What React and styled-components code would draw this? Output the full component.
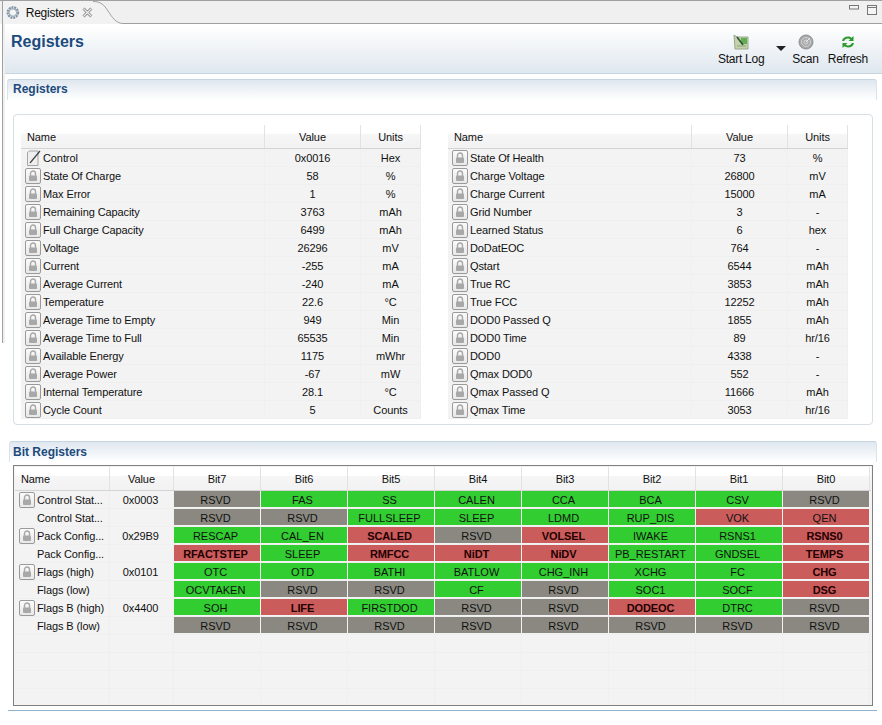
import React from "react"
import styled, { createGlobalStyle } from "styled-components"

const Global = createGlobalStyle`
  html, body { margin: 0; padding: 0; background: #fff; }
  body { font-family: "Liberation Sans", Arial, sans-serif; font-size: 12px; color: #111; }
`

const Page = styled.div`
  width: 882px;
  height: 725px;
  overflow: hidden;
  background: #fff;
  display: flex;
  flex-direction: column;
`
const TabStrip = styled.div`
  height: 23px;
  display: flex;
  align-items: stretch;
  background: #f0f0f0;
  border-top: 1px solid #a0a0a0;
  position: relative;
  &::after {
    content: "";
    flex: 1;
    border-bottom: 1px solid #a0a0a0;
  }
`
const Tab = styled.div`
  width: 87px;
  padding-left: 3px;
  display: flex;
  align-items: center;
  background: #f2f2f2;
  border-left: 1px solid #a0a0a0;
  margin-left: 2px;
  font-size: 12px;
  letter-spacing: -0.25px;
  color: #111;
`
const TabLabel = styled.span`
  margin: 0 8px 0 6px;
`
const TabControls = styled.div`
  position: absolute;
  right: 5px;
  top: 4px;
  display: flex;
  gap: 8px;
  align-items: flex-start;
`
const Body = styled.div`
  flex: 1;
  display: flex;
  flex-direction: column;
  min-height: 0;
  position: relative;
  &::before {
    content: "";
    position: absolute;
    left: 2px;
    top: 0;
    width: 2px;
    height: 319px;
    background: #f0f0f0;
    border-left: 1px solid #a0a0a0;
  }
`
const FormHead = styled.div`
  height: 48px;
  box-sizing: border-box;
  margin: 2px 0 0 5px;
  padding: 5px 14px 0 6px;
  display: flex;
  justify-content: space-between;
  background: linear-gradient(#ffffff, #dfe7ef);
  border-bottom: 1px solid #c6d5e2;
`
const Title = styled.h1`
  margin: 0;
  font-size: 16px;
  line-height: 22px;
  font-weight: bold;
  color: #1c4a7c;
`
const Tools = styled.div`
  display: flex;
  align-items: flex-start;
  margin-top: 3px;
`
const Tool = styled.div`
  display: flex;
  flex-direction: column;
  align-items: center;
  gap: 2px;
  margin-left: ${p => p.$gap || 0}px;
  font-size: 12px;
  line-height: 15px;
  letter-spacing: -0.25px;
  color: #111;
`
const Caret = styled.div`
  width: 0;
  height: 0;
  margin: 12px 6px 0 12px;
  border-left: 5px solid transparent;
  border-right: 5px solid transparent;
  border-top: 5px solid #222;
`
const Section = styled.section`
  margin: ${p => p.$top}px 5px 0 ${p => p.$left}px;
`
const SectionHead = styled.div`
  height: 20px;
  margin-left: ${p => p.$inset || 0}px;
  padding-left: ${p => p.$pad}px;
  font-size: 12px;
  line-height: ${p => p.$line}px;
  font-weight: bold;
  color: #1c4a7c;
  background: linear-gradient(#dfe7ef, #ffffff);
  border-top: 1px solid #c6d5e2;
  border-left: 1px solid #d9e3ec;
  border-right: 1px solid #d9e3ec;
  border-radius: 3px 3px 0 0;
`
const Card = styled.div`
  margin: 14px 4px 0 6px;
  height: 311px;
  box-sizing: border-box;
  padding: 10px 7px 0;
  display: flex;
  gap: 27px;
  border: 1px solid #d6dee6;
  border-radius: 4px;
`
const TableBox = styled.div`
  width: 400px;
`
const Row = styled.div`
  display: grid;
  grid-template-columns: ${p => p.$cols};
  height: 18px;
  background: #f3f3f3;
  border-bottom: 1px solid #efefef;
  box-sizing: border-box;
`
const HeadRow = styled(Row)`
  height: 24px;
  background: linear-gradient(#ffffff 36%, #f6f6f6 40%, #f2f2f2);
  border-bottom: 1px solid #d4d4d4;
`
const HeadCell = styled.div`
  display: flex;
  align-items: center;
  justify-content: ${p => (p.$left ? "flex-start" : "center")};
  padding-left: ${p => (p.$left ? "6px" : 0)};
  border-right: 1px solid #e2e2e2;
  font-size: 11px;
  letter-spacing: -0.1px;
  color: #111;
`
const NameCell = styled.div`
  display: flex;
  align-items: center;
  gap: 2px;
  padding-left: 4px;
  font-size: 11px;
  letter-spacing: -0.1px;
  white-space: nowrap;
  border-right: 1px solid #efefef;
  overflow: hidden;
`
const Cell = styled.div`
  display: flex;
  align-items: center;
  justify-content: center;
  font-size: 11px;
  letter-spacing: -0.1px;
  border-right: 1px solid #efefef;
`
const ValueCell = styled(Cell)`
  padding-right: 2px;
`
const IconBtn = styled.span`
  width: 16px;
  height: 16px;
  box-sizing: border-box;
  flex: none;
  border: 1px solid #9a9a9a;
  border-radius: 2px;
  background: linear-gradient(#fbfbfb, #e8e8e8);
  display: flex;
  align-items: center;
  justify-content: center;
`
const PlainIcon = styled.span`
  width: 14px;
  height: 16px;
  margin-left: 2px;
  flex: none;
  display: flex;
`
const Spacer = styled.span`
  width: 16px;
  flex: none;
`
const BitFrame = styled.div`
  margin: 3px 4px 0 5px;
  height: 241px;
  box-sizing: border-box;
  border: 1px solid #808080;
  padding: 1px;
  background: #f3f3f3;
  overflow: hidden;
`
const BitCell = styled.div`
  display: flex;
  align-items: center;
  justify-content: center;
  padding: 1px 3px 0 0;
  margin: 0 1px 1px 0;
  font-size: 11px;
  font-weight: ${p => (p.$bold ? "bold" : "normal")};
  letter-spacing: ${p => (p.$bold ? "-0.1px" : "0")};
  color: ${p => (p.$bold ? "#200" : "#111")};
  background: ${p => ({ g: "#31cd31", r: "#cb5c5c", n: "#8a8880" }[p.$state])};
`
const BottomRule = styled.div`
  margin-top: 4px;
  height: 1px;
  background: #91b2cc;
`

const Lock = () => (
  <IconBtn>
    <svg width="10" height="12" viewBox="0 0 10 12">
      <path d="M2.500 6V3.500a2.500 2.500 0 0 1 5 0V6" fill="none" stroke="#a8a8a8" strokeWidth="1.4" />
      <rect x="1" y="5.500" width="8" height="5.500" rx="1" fill="#a8a8a8" />
    </svg>
  </IconBtn>
)
const Pencil = () => (
  <PlainIcon>
    <svg width="14" height="16" viewBox="0 0 14 16">
      <path d="M.5 2.500l2-1.500h8.500v14.500H.5z" fill="#efefef" stroke="#a5a5a5" />
      <path d="M3 13L13 1" stroke="#444" strokeWidth="1.2" />
    </svg>
  </PlainIcon>
)
const Gear = () => (
  <svg width="14" height="15" viewBox="0 0 15 15">
    <circle cx="7.500" cy="7.500" r="5.200" fill="none" stroke="#7f93a6" strokeWidth="3.400" strokeDasharray="2 .8" />
    <circle cx="7.500" cy="7.500" r="4.200" fill="none" stroke="#a9b6c2" strokeWidth="1.400" />
    <circle cx="7.500" cy="7.500" r="2.600" fill="#f3f5f7" />
  </svg>
)
const CloseX = () => (
  <svg width="11" height="11" viewBox="0 0 11 11">
    <path d="M1.500 1.500l8 8M9.500 1.500l-8 8" stroke="#8a8a8a" strokeWidth="3" />
    <path d="M1.500 1.500l8 8M9.500 1.500l-8 8" stroke="#f4f4f4" strokeWidth="1.200" />
  </svg>
)
const TabCurve = () => (
  <svg width="30" height="23" viewBox="0 0 30 23">
    <path d="M0 0c8 0 11 4 15 10s8 12 15 12.500V23H0z" fill="#f2f2f2" />
    <path d="M0 .500c8 0 11 3.500 15 9.500s8 12.500 15 12.500" fill="none" stroke="#a0a0a0" />
  </svg>
)
const LogIcon = () => (
  <svg width="16" height="16" viewBox="0 0 16 16">
    <path d="M1 1l3 2h11v12H2z" fill="#c3d2a8" stroke="#9aa98c" />
    <rect x="8" y="4" width="6" height="6" fill="#5fae4f" />
    <path d="M4 3l6 8" stroke="#2f4f3f" strokeWidth="1.600" />
    <path d="M4 12h9" stroke="#8fa37f" />
  </svg>
)
const ScanIcon = () => (
  <svg width="16" height="16" viewBox="0 0 16 16">
    <circle cx="8" cy="8" r="7" fill="#a8a8a8" stroke="#8f8f8f" />
    <circle cx="8" cy="8" r="4.500" fill="none" stroke="#d2d2d2" />
    <circle cx="8" cy="8" r="2" fill="none" stroke="#dcdcdc" />
    <path d="M8 8l4-4" stroke="#e8e8e8" />
  </svg>
)
const RefreshIcon = () => (
  <svg width="16" height="16" viewBox="0 0 16 16">
    <path d="M2 7c.5-3 3-4.500 6-4.500 1.500 0 2.500.5 3.500 1.200L13.500 2v5H8.500l1.800-1.800C9.500 4.700 8.800 4.500 8 4.500 6 4.500 4.700 5.500 4.200 7z" fill="#2d9a2d" />
    <path d="M14 9c-.5 3-3 4.500-6 4.500-1.500 0-2.500-.5-3.500-1.200L2.500 14V9h5l-1.800 1.800c.8.500 1.500.7 2.300.7 2 0 3.300-1 3.800-2.500z" fill="#2d9a2d" />
  </svg>
)
const MinMax = () => (
  <>
    <svg width="10" height="5" viewBox="0 0 10 5"><rect x=".5" y=".5" width="9" height="3.500" fill="#f4f4f4" stroke="#777" /></svg>
    <svg width="10" height="10" viewBox="0 0 10 10"><rect x=".5" y=".5" width="9" height="9" fill="#f4f4f4" stroke="#777" /><path d="M1 2.500h8" stroke="#777" /></svg>
  </>
)

const leftRows = [
  ["Control", "0x0016", "Hex", true],
  ["State Of Charge", "58", "%"],
  ["Max Error", "1", "%"],
  ["Remaining Capacity", "3763", "mAh"],
  ["Full Charge Capacity", "6499", "mAh"],
  ["Voltage", "26296", "mV"],
  ["Current", "-255", "mA"],
  ["Average Current", "-240", "mA"],
  ["Temperature", "22.6", "°C"],
  ["Average Time to Empty", "949", "Min"],
  ["Average Time to Full", "65535", "Min"],
  ["Available Energy", "1175", "mWhr"],
  ["Average Power", "-67", "mW"],
  ["Internal Temperature", "28.1", "°C"],
  ["Cycle Count", "5", "Counts"],
]
const rightRows = [
  ["State Of Health", "73", "%"],
  ["Charge Voltage", "26800", "mV"],
  ["Charge Current", "15000", "mA"],
  ["Grid Number", "3", "-"],
  ["Learned Status", "6", "hex"],
  ["DoDatEOC", "764", "-"],
  ["Qstart", "6544", "mAh"],
  ["True RC", "3853", "mAh"],
  ["True FCC", "12252", "mAh"],
  ["DOD0 Passed Q", "1855", "mAh"],
  ["DOD0 Time", "89", "hr/16"],
  ["DOD0", "4338", "-"],
  ["Qmax DOD0", "552", "-"],
  ["Qmax Passed Q", "11666", "mAh"],
  ["Qmax Time", "3053", "hr/16"],
]

// n = reserved, g = clear, r = set; * = bold
const bitRows = [
  ["Control Stat...", "0x0003", true, "n:RSVD g:FAS g:SS g:CALEN g:CCA g:BCA g:CSV n:RSVD"],
  ["Control Stat...", "", false, "n:RSVD n:RSVD g:FULLSLEEP g:SLEEP g:LDMD g:RUP_DIS r:VOK r:QEN"],
  ["Pack Config...", "0x29B9", true, "g:RESCAP g:CAL_EN r:*SCALED n:RSVD r:*VOLSEL g:IWAKE g:RSNS1 r:*RSNS0"],
  ["Pack Config...", "", false, "r:*RFACTSTEP g:SLEEP r:*RMFCC r:*NiDT r:*NiDV g:PB_RESTART g:GNDSEL r:*TEMPS"],
  ["Flags (high)", "0x0101", true, "g:OTC g:OTD g:BATHI g:BATLOW g:CHG_INH g:XCHG g:FC r:*CHG"],
  ["Flags (low)", "", false, "g:OCVTAKEN n:RSVD n:RSVD g:CF n:RSVD g:SOC1 g:SOCF r:*DSG"],
  ["Flags B (high)", "0x4400", true, "g:SOH r:*LIFE g:FIRSTDOD n:RSVD n:RSVD r:*DODEOC g:DTRC n:RSVD"],
  ["Flags B (low)", "", false, "n:RSVD n:RSVD n:RSVD n:RSVD n:RSVD n:RSVD n:RSVD n:RSVD"],
]
const regCols = "244px 96px 60px"
const bitCols = "95px 64px repeat(8, 87px)"
const bitNames = ["Bit7", "Bit6", "Bit5", "Bit4", "Bit3", "Bit2", "Bit1", "Bit0"]

const RegTable = ({ rows }) => (
  <TableBox>
    <HeadRow $cols={regCols}>
      <HeadCell $left>Name</HeadCell>
      <HeadCell>Value</HeadCell>
      <HeadCell>Units</HeadCell>
    </HeadRow>
    {rows.map(([name, value, units, editable]) => (
      <Row $cols={regCols} key={name}>
        <NameCell>
          {editable ? <Pencil /> : <Lock />}
          {name}
        </NameCell>
        <Cell>{value}</Cell>
        <Cell>{units}</Cell>
      </Row>
    ))}
  </TableBox>
)

export default function App() {
  return (
    <Page>
      <Global />
      <TabStrip>
        <Tab>
          <Gear />
          <TabLabel>Registers</TabLabel>
          <CloseX />
        </Tab>
        <TabCurve />
        <TabControls><MinMax /></TabControls>
      </TabStrip>
      <Body>
        <FormHead>
          <Title>Registers</Title>
          <Tools>
            <Tool><LogIcon />Start Log</Tool>
            <Caret />
            <Tool><ScanIcon />Scan</Tool>
            <Tool $gap={9}><RefreshIcon />Refresh</Tool>
          </Tools>
        </FormHead>
        <Section $top={5} $left={7}>
          <SectionHead $pad={5} $line={19}>Registers</SectionHead>
          <Card>
            <RegTable rows={leftRows} />
            <RegTable rows={rightRows} />
          </Card>
        </Section>
        <Section $top={16} $left={8}>
          <SectionHead $inset={1} $pad={3} $line={21}>Bit Registers</SectionHead>
          <BitFrame>
            <HeadRow $cols={bitCols}>
              <HeadCell $left>Name</HeadCell>
              <HeadCell>Value</HeadCell>
              {bitNames.map(b => <HeadCell key={b}>{b}</HeadCell>)}
            </HeadRow>
            {bitRows.map(([name, value, locked, bits], i) => (
              <Row $cols={bitCols} key={i}>
                <NameCell>
                  {locked ? <Lock /> : <Spacer />}
                  {name}
                </NameCell>
                <ValueCell>{value}</ValueCell>
                {bits.split(" ").map((b, j) => {
                  const [state, label] = b.split(":")
                  const bold = label.startsWith("*")
                  return <BitCell key={j} $state={state} $bold={bold}>{bold ? label.slice(1) : label}</BitCell>
                })}
              </Row>
            ))}
            {[0, 1, 2, 3].map(i => (
              <Row $cols={bitCols} key={i}>
                <Cell />
                <Cell />
                {bitNames.map(b => <Cell key={b} />)}
              </Row>
            ))}
          </BitFrame>
          <BottomRule />
        </Section>
      </Body>
    </Page>
  )
}
